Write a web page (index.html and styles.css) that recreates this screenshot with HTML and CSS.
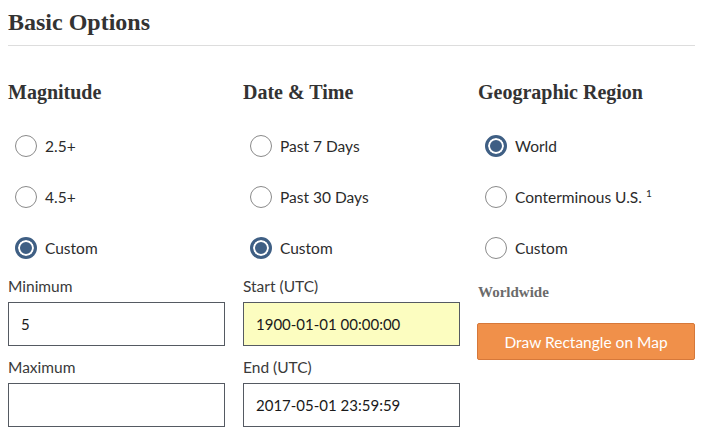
FILE: index.html
```html
<!DOCTYPE html>
<html>
<head>
<meta charset="utf-8">
<link rel="stylesheet" href="styles.css">
</head>
<body>
<div class="page">
  <h2 class="title">Basic Options</h2>
  <div class="columns">
    <section class="col">
      <h3 class="col-title">Magnitude</h3>
      <div class="radios">
        <div class="radio-row"><span class="radio"></span><span class="radio-label">2.5+</span></div>
        <div class="radio-row"><span class="radio"></span><span class="radio-label">4.5+</span></div>
        <div class="radio-row"><span class="radio checked"></span><span class="radio-label">Custom</span></div>
      </div>
      <div class="field">
        <label class="field-label">Minimum</label>
        <div class="input">5</div>
      </div>
      <div class="field">
        <label class="field-label">Maximum</label>
        <div class="input"></div>
      </div>
    </section>
    <section class="col">
      <h3 class="col-title">Date &amp; Time</h3>
      <div class="radios">
        <div class="radio-row"><span class="radio"></span><span class="radio-label">Past 7 Days</span></div>
        <div class="radio-row"><span class="radio"></span><span class="radio-label">Past 30 Days</span></div>
        <div class="radio-row"><span class="radio checked"></span><span class="radio-label">Custom</span></div>
      </div>
      <div class="field">
        <label class="field-label">Start (UTC)</label>
        <div class="input highlight">1900-01-01 00:00:00</div>
      </div>
      <div class="field">
        <label class="field-label">End (UTC)</label>
        <div class="input">2017-05-01 23:59:59</div>
      </div>
    </section>
    <section class="col">
      <h3 class="col-title">Geographic Region</h3>
      <div class="radios">
        <div class="radio-row"><span class="radio checked"></span><span class="radio-label">World</span></div>
        <div class="radio-row"><span class="radio"></span><span class="radio-label">Conterminous U.S. <sup class="sup">1</sup></span></div>
        <div class="radio-row"><span class="radio"></span><span class="radio-label">Custom</span></div>
      </div>
      <div class="region-name">Worldwide</div>
      <button class="btn">Draw Rectangle on Map</button>
    </section>
  </div>
</div>
</body>
</html>
```

FILE: styles.css
```css
html, body {
  margin: 0;
  padding: 0;
  background: #fff;
}
.page {
  padding: 0 8px;
  font-family: Lato, "Liberation Sans", sans-serif;
  color: #333;
}
.title {
  font-family: "Liberation Serif", serif;
  font-weight: bold;
  font-size: 24px;
  line-height: 29px;
  margin: 8px 0 0 0;
  padding-bottom: 8px;
  border-bottom: 1px solid #dddddd;
  color: #333;
}
.columns {
  display: grid;
  grid-template-columns: 217px 217px 217px;
  column-gap: 18px;
  margin-top: 34px;
}
.col-title {
  font-family: "Liberation Serif", serif;
  font-weight: bold;
  font-size: 20px;
  line-height: 24px;
  margin: 0;
  color: #333;
}
.radios {
  margin-top: 16px;
}
.radio-row {
  height: 51px;
  display: flex;
  align-items: center;
  padding-left: 7px;
}
.radio {
  box-sizing: border-box;
  width: 22px;
  height: 22px;
  border-radius: 50%;
  border: 1.5px solid #8a8a8a;
  background: #fff;
  flex: none;
}
.radio.checked {
  border: 3px solid #3f5f84;
  background: #3f5f84;
  box-shadow: inset 0 0 0 2px #fff;
}
.radio-label {
  margin-left: 8px;
  font-size: 15.5px;
  color: #2b2b2b;
}
.sup {
  font-size: 10px;
  vertical-align: 6px;
  line-height: 0;
}
.field {
  display: flex;
  flex-direction: column;
}
.field + .field {
  margin-top: 11px;
}
.field-label {
  font-size: 15.5px;
  line-height: 20px;
  margin-top: 3px;
  margin-bottom: 6px;
  color: #3a3a3a;
}
.field + .field .field-label {
  margin-top: 0;
}
.input {
  box-sizing: border-box;
  height: 44px;
  border: 1px solid #555a62;
  padding: 0 12px;
  display: flex;
  align-items: center;
  font-size: 15px;
  color: #1a1a1a;
  background: #fff;
}
.input.highlight {
  background: #fcfdc0;
}
.region-name {
  font-family: "Liberation Serif", serif;
  font-weight: bold;
  font-size: 15px;
  line-height: 20px;
  color: #6b6b6b;
  margin-top: 9px;
}
.btn {
  display: block;
  box-sizing: border-box;
  width: 218px;
  height: 37px;
  margin-top: 21px;
  margin-left: -1px;
  background: #f0904a;
  border: 1px solid #d6783a;
  border-radius: 2px;
  color: #fff;
  font-family: Lato, "Liberation Sans", sans-serif;
  font-size: 15.5px;
  padding: 0;
}
```
